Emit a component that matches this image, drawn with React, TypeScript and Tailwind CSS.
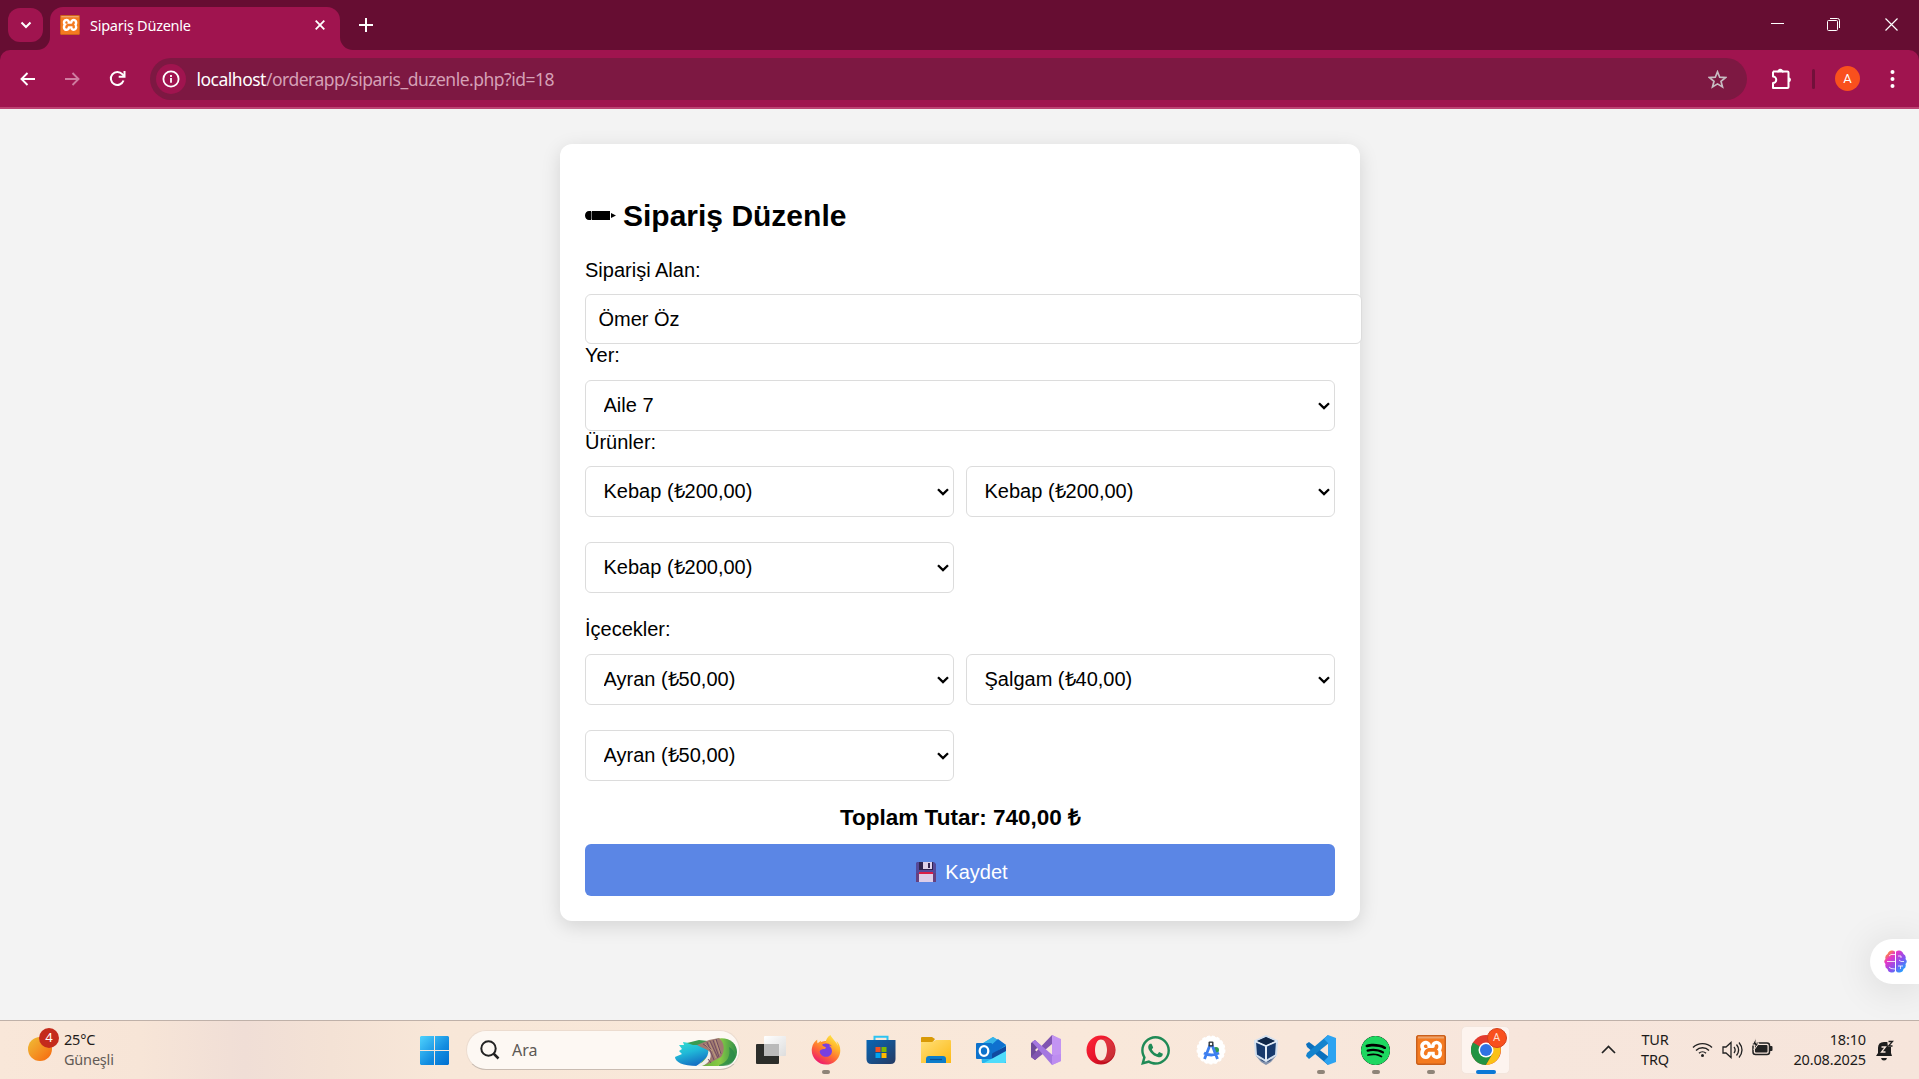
import React from "react";
import { SiSpotify, SiXampp } from "react-icons/si";
import { FaWhatsapp, FaFirefoxBrowser } from "react-icons/fa";

const ui = "font-['Noto_Sans','Open_Sans',sans-serif]";

function XamppIcon({ size, className = "" }: { size: number; className?: string }) {
  return (
    <svg width={size} height={size} viewBox="0 0 30 30" className={"shrink-0 " + className}>
      <path d="M3 3h24v24H3Z" fill="white" />
      <SiXampp size={30} color="#f47a20" />
      <rect x=".7" y=".7" width="28.600" height="28.600" rx="2" fill="none" stroke="#c95f1c" strokeWidth="1.400" />
      <path d="M2 1.500h26v2H2Z" fill="#eda26b" />
    </svg>
  );
}

function TabStrip() {
  return (
    <div className="flex h-[50px] items-start bg-[#660d32] pl-2">
      <div className="mt-2 flex h-[34px] w-[35px] items-center justify-center rounded-[12px] bg-[#a0144f]">
        <svg width="12" height="8" viewBox="0 0 12 8" fill="none" stroke="white" strokeWidth="2"><path d="M1.5 1.5 6 6l4.5-4.5" /></svg>
      </div>
      <div className="relative ml-[7px] mt-[7px] flex h-[43px] w-[290px] rounded-t-[13px] bg-[#a0144f] pl-[10px]">
        <svg className="absolute -left-[13px] bottom-0" width="13" height="13"><path d="M13 0V13H0A13 13 0 0 0 13 0Z" fill="#a0144f" /></svg>
        <svg className="absolute -right-[13px] bottom-0" width="13" height="13"><path d="M0 0V13H13A13 13 0 0 1 0 0Z" fill="#a0144f" /></svg>
        <XamppIcon size={20} className="mt-2" />
        <span className="ml-[10px] mt-[7px] whitespace-nowrap text-[14.5px] leading-[22px] tracking-[-0.26px] text-white">Sipariş Düzenle</span>
        <svg className="absolute left-[265px] top-[13px]" width="10" height="10" fill="none" stroke="white" strokeWidth="1.8"><path d="m.7.7 8.6 8.6M9.3.7.7 9.3" /></svg>
      </div>
      <svg className="ml-[19px] mt-[18px]" width="14" height="14" stroke="white" strokeWidth="2"><path d="M7 0v14M0 7h14" /></svg>
      <div className="ml-auto flex items-start">
        <svg className="mt-[23px]" width="13" height="2"><path d="M0 .5h13" stroke="white" /></svg>
        <svg className="ml-[43px] mt-[18px]" width="13" height="13" fill="none" stroke="white"><rect x=".5" y="2.5" width="10" height="10" rx="1" /><path d="M3 .5h7.500a2 2 0 0 1 2 2V10" /></svg>
        <svg className="ml-[45px] mr-[21px] mt-[18px]" width="13" height="13" fill="none" stroke="white" strokeWidth="1.2"><path d="m.5.5 12 12M12.500.5l-12 12" /></svg>
      </div>
    </div>
  );
}

function Toolbar() {
  return (
    <div className="bg-[#660d32]">
      <div className="flex h-[59px] items-start rounded-t-[10px] border-b-2 border-[#bd4273] bg-[#a0144f] pt-2">
        <svg className="ml-5 mt-[14px]" width="15" height="14" fill="none" stroke="white" strokeWidth="1.9"><path d="M15 7H1.500M7.500 1 1.500 7l6 6" /></svg>
        <svg className="ml-[30px] mt-[14px]" width="15" height="14" fill="none" stroke="#cf7ca0" strokeWidth="1.9"><path d="M0 7h13.500M7.500 1l6 6-6 6" /></svg>
        <svg className="ml-[29px] mt-[12px]" width="17" height="17" fill="none" stroke="white" strokeWidth="2"><path d="M14.500 10.500A6.500 6.500 0 1 1 13.300 4.200L15 6" /><path d="M15.500 1v5.800H9.700" /></svg>
        <div className="ml-6 flex h-[42px] w-[1597px] items-center rounded-full bg-[#7d1842] pl-[6px]">
          <div className="flex size-[30px] items-center justify-center rounded-full bg-[#a0144f]">
            <svg width="18" height="18" fill="none" stroke="white" strokeWidth="1.8"><circle cx="9" cy="9" r="7.600" /><path d="M9 8v4.700M9 5v1.900" /></svg>
          </div>
          <span className="ml-[10.5px] whitespace-nowrap text-[17.5px] leading-6 tracking-[-0.5px] text-[#d5a0b6]"><span className="text-white">localhost</span>/orderapp/siparis_duzenle.php?id=18</span>
          <svg className="ml-auto mr-5" width="19" height="19" viewBox="0 0 19 19" fill="none" stroke="#c7bcc2" strokeWidth="1.7"><path d="m9.500 1.800 2.200 5.400 5.800.4-4.500 3.700 1.500 5.700-5-3.100-5 3.100L6 11.300 1.500 7.600l5.800-.4Z" /></svg>
        </div>
        <svg className="ml-6 mt-[10px]" width="22" height="22" viewBox="0 0 22 22" fill="none" stroke="white" strokeWidth="2"><path d="M2 3.500h5.500M11 3.500h5.500q1 0 1 1v14.800q0 .7-1 .7H2v-5a3.200 3.200 0 0 0 0-6.500v-5" strokeLinejoin="round" /><path d="M6.500 3.500h6" /><path d="M6.700 3.300a2.600 2.600 0 0 1 5.200 0ZM17.500 9.200a2.400 2.400 0 0 1 0 5Z" fill="white" stroke="none" /></svg>
        <div className="ml-[19px] mt-[11px] h-5 w-[3px] rounded bg-[#72103a]" />
        <div className="ml-5 mt-2 flex size-[25px] items-center justify-center rounded-full bg-[#f9501d] font-[Roboto,sans-serif] text-[13px] text-white">A</div>
        <svg className="ml-[30px] mt-[12px]" width="5" height="18" fill="white"><circle cx="2.500" cy="2" r="2" /><circle cx="2.500" cy="9" r="2" /><circle cx="2.500" cy="16" r="2" /></svg>
      </div>
    </div>
  );
}

function Select({ value }: { value: string }) {
  return (
    <div className="relative h-[51px]">
      <select className="h-full w-full appearance-none rounded-[6px] border border-[#dcdcdc] bg-white pl-[17.5px] text-[20px] text-black" defaultValue={value}>
        <option>{value}</option>
      </select>
      <svg className="pointer-events-none absolute right-[5px] top-[22px]" width="12" height="8" fill="none" stroke="black" strokeWidth="2.300"><path d="m1 1.200 5 4.900 5-4.900" /></svg>
    </div>
  );
}

function OptionGrid({ items }: { items: string[] }) {
  return (
    <div className="grid grid-cols-2 gap-x-3 gap-y-[25px]">
      {items.map((item, i) => <Select key={i} value={item} />)}
    </div>
  );
}

function OrderCard() {
  return (
    <div className="mt-[35px] ml-[560px] h-[777px] w-[800px] rounded-[12px] bg-white px-[25px] pt-[55px] text-[20px] leading-[23px] text-black shadow-[0_5px_19px_rgba(0,0,0,0.13)]">
      <h2 className="flex h-[34px] text-[30px] font-bold leading-[34px]">
        <svg className="mr-[7px] mt-3" width="31" height="10"><path d="M4 0h2v9H4a4 4.500 0 0 1 0-9ZM7 0h18v9H7l-.5-1V1ZM26 2l5 2.500L26 7Z" /></svg>
        Sipariş Düzenle
      </h2>
      <div className="mt-[26px]">Siparişi Alan:</div>
      <input className="mt-3 block h-[50px] w-[777px] rounded-[6px] border border-[#dcdcdc] bg-white pl-[12.5px] text-[20px]" defaultValue="Ömer Öz" />
      <div className="mb-[13px]">Yer:</div>
      <Select value="Aile 7" />
      <div className="mb-3">Ürünler:</div>
      <OptionGrid items={["Kebap (₺200,00)", "Kebap (₺200,00)", "Kebap (₺200,00)"]} />
      <div className="mb-[13px] mt-[25px]">İçecekler:</div>
      <OptionGrid items={["Ayran (₺50,00)", "Şalgam (₺40,00)", "Ayran (₺50,00)"]} />
      <div className="mt-6 pl-px text-center text-[22.5px] font-bold leading-[26px]">Toplam Tutar: 740,00 ₺</div>
      <button className="mt-[13px] flex h-[52px] w-full items-center justify-center rounded-[6px] bg-[#5b86e5] pl-[4px] pt-[4px] text-white">
        <svg className="mr-[9px]" width="20" height="20">
          <path d="M1 0h17l2 2v18H0V1Z" fill="#55499a" /><path d="M0 11h20v9H0Z" fill="#66407f" />
          <path d="M3 0h14v8H3Z" fill="#2f2350" /><path d="M7 0h9v7H7Z" fill="#ddd0ea" /><path d="M12 1h2v5h-2Z" fill="#342552" />
          <path d="M3 10h14v10H3Z" fill="#ddcde8" /><path d="M3 10h14v2H3Z" fill="#d91e48" />
        </svg>
        Kaydet
      </button>
    </div>
  );
}

function StartIcon() {
  return (
    <svg width="29" height="29">
      <defs><linearGradient id="win" gradientUnits="userSpaceOnUse" x1="0" y1="0" x2="29" y2="29"><stop stopColor="#4fd3fd" /><stop offset=".6" stopColor="#128ce0" /><stop offset="1" stopColor="#006fd0" /></linearGradient></defs>
      <path fill="url(#win)" d="M1 0h13v14H0V1ZM15 0h13l1 1v13H15ZM0 15h14v14H1l-1-1ZM15 15h14v13l-1 1H15Z" />
    </svg>
  );
}

function BeachArt() {
  return (
    <svg width="62" height="29" viewBox="0 0 62 29">
      <defs>
        <linearGradient id="sea" x1="0" y1="0" x2=".4" y2="1"><stop stopColor="#35e0cf" /><stop offset=".5" stopColor="#20b9d8" /><stop offset="1" stopColor="#1673c4" /></linearGradient>
        <linearGradient id="hill"><stop stopColor="#5fae3c" /><stop offset=".55" stopColor="#8aca45" /><stop offset="1" stopColor="#2e8f49" /></linearGradient>
      </defs>
      <path d="M41 1c12-3 21 4 21 13S54 28 42 28H24Z" fill="url(#hill)" />
      <path d="M44 27c8-2 12-9 10-18 6 3 8 10 4 15-3 4-8 4-14 4Z" fill="#25864a" fillOpacity=".7" />
      <path d="M8 4 26 7l8 3-1 8-11 10C8 28 0 24 0 19c2-1 5-2 7-3l-3-3 3-2-3-4 5 0Z" fill="url(#sea)" />
      <path d="M33 9c2 8-3 15-12 19h6c8-3 12-9 11-16Z" fill="#f2eeea" />
      <path d="M12 5 24 2l9 1-6 4-9 0Z" fill="#3a9a50" />
      <path d="M22 7 34 2 44 0c6 5 6 13 2 19L29 28c5-4 8-8 6-14-3-3-8-4-13-7Z" fill="#a07a70" />
      <path d="M32 4l7 18M35 3l8 17M38 2l6 17M41 1l5 15M28 6l8 5M36 25l-3-4" stroke="#6b4660" strokeWidth=".9" fill="none" />
      <path d="M34 4l7 16M40 2l5 14M30 6l7 7" stroke="#d0b088" strokeWidth=".6" fill="none" />
    </svg>
  );
}

const icons: { art: React.ReactNode; run?: boolean; active?: boolean }[] = [
  { art: <svg width="30" height="28"><defs><linearGradient id="tv" x2="1" y2="1"><stop stopColor="#fff" /><stop offset="1" stopColor="#ddd" /></linearGradient></defs><rect y="8" width="23" height="20" rx="1" fill="#2c2d2a" /><rect x="8" width="22" height="20" rx="1" fill="url(#tv)" /><rect x="8" y="8" width="15" height="12" fill="#bababa" /></svg> },
  { run: true, art: <div className="relative"><svg width="30" height="30" viewBox="0 0 30 30" className="absolute"><defs><linearGradient id="fox" x1=".9" y1="0" x2=".3" y2="1"><stop stopColor="#fff34f" /><stop offset=".35" stopColor="#ffb52c" /><stop offset=".65" stopColor="#ff6a34" /><stop offset="1" stopColor="#ed1671" /></linearGradient></defs><circle cx="15" cy="17" r="11" fill="#ff8a2b" /><circle cx="15" cy="15.500" r="7" fill="#793fe0" /></svg><FaFirefoxBrowser size={30} fill="url(#fox)" className="relative" /></div> },
  { art: <svg width="30" height="30"><defs><linearGradient id="store" x2="1" y2="1"><stop stopColor="#0866b4" /><stop offset="1" stopColor="#263a63" /></linearGradient></defs><path d="M8.500 6V1.800h13V6" fill="none" stroke="#2dc3f2" strokeWidth="2" /><path d="M.5 5h29v19q0 5-5 5h-19q-5 0-5-5Z" fill="url(#store)" /><path d="M9.500 12h5v5h-5Z" fill="#f25022" /><path d="M15.500 12h5v5h-5Z" fill="#7fba00" /><path d="M9.500 18h5v5h-5Z" fill="#00a4ef" /><path d="M15.500 18h5v5h-5Z" fill="#ffb900" /></svg> },
  { art: <svg width="30" height="28"><defs><linearGradient id="fold" x2="1" y2="1"><stop stopColor="#ffe07a" /><stop offset="1" stopColor="#fdb913" /></linearGradient></defs><path d="M0 2q0-1 1-1h10l3 2-3 4H0Z" fill="#d99a06" /><path d="M0 6h11l4-2h14q1 0 1 1v22H0Z" fill="url(#fold)" /><path d="M5 27v-4q0-3 3-3h14q3 0 3 3v4Z" fill="#0c7dca" /><path d="M9 23.500h12" stroke="#0a4f93" strokeWidth="1.200" /></svg> },
  { art: <svg width="30" height="28"><path d="M4 9 17 1l13 8v18H6Z" fill="#27b6ee" /><path d="m4 9 13-8 5 3-12 8Z" fill="#36b3e9" /><path d="m22 3 8 6-13 9-5-6Z" fill="#0f70cf" /><path d="M30 10v7l-13 9-2-8Z" fill="#1049a0" /><path d="M30 15v10q0 2-2 2H8Z" fill="#4fdcfb" /><rect y="7" width="16" height="16" rx="1" fill="#0d72cc" /><ellipse cx="8" cy="15" rx="4.300" ry="4.800" fill="none" stroke="white" strokeWidth="2.300" /></svg> },
  { art: <svg width="30" height="30"><path d="M0 8 4 5l5 5-5 5 5 5-5 5-4-3Z" fill="#6e4b9b" /><path d="M0 22 21 0l9 5L4 25Z" fill="#8055b0" /><path d="m21 0 9 4v22l-9 4Z" fill="#c394f2" /><path d="M21 9v12l-7-6Z" fill="#f7e7d9" /><path d="M4 5 26 24l-5 6L1 7Z" fill="#a477e0" /><path d="M21 30V21l9-2v7Z" fill="#bd8df0" /></svg> },
  { art: <svg width="30" height="30"><defs><linearGradient id="op" x2="1" y2="1"><stop stopColor="#ff2638" /><stop offset=".5" stopColor="#e8142a" /><stop offset="1" stopColor="#a00913" /></linearGradient></defs><path fillRule="evenodd" fill="url(#op)" d="M15 .5a14.500 14.500 0 1 0 0 29 14.500 14.500 0 0 0 0-29Zm0 4c4 0 6 5 6 10.500S19 25.500 15 25.500 9 20.500 9 15 11 4.500 15 4.500Z" /><path d="M15 4.500C18 2.500 21 3 24 5c7 6 7 14 0 20-3 2-6 2.500-9 .5 4 0 6-5 6-10.500S19 4.500 15 4.500Z" fill="#d65050" fillOpacity=".5" /></svg> },
  { art: <FaWhatsapp size={33} color="#1f8a56" /> },
  { art: <svg width="30" height="30"><circle cx="15" cy="15" r="13.700" fill="white" stroke="#fff" strokeWidth="1.500" strokeDasharray="3 2" /><circle cx="20" cy="15" r="3" fill="#2f9b54" /><path d="m14 10-5.500 14M16 10l5.500 14M8 18q7 4 15 0" fill="none" stroke="#3d7ff0" strokeWidth="2.800" /><rect x="12.500" y="6.500" width="5" height="5" rx="1" fill="#303940" /><circle cx="15" cy="9" r="1.200" fill="white" /></svg> },
  { art: <svg width="28" height="30"><path d="m4 21 5 6 5 3 5-3 5-6Z" fill="#8493ad" /><path d="M9 24q5 4 10 0" stroke="#24416f" strokeWidth="2" fill="none" /><path d="m14 1 11 5-1 14-10 6-10-6L3 6Z" fill="#173a6d" stroke="#d3e0ef" strokeWidth="2" /><path d="m3 6 11 5 11-5M14 11v15" stroke="#e2ecf7" strokeWidth="2" fill="none" /><path d="m14 2 9 4-9 4-9-4Z" fill="#102748" /></svg> },
  { run: true, art: <svg width="30" height="30"><path d="m0 9 3-2 20 15-1 8L1 12Z" fill="#0b70bd" /><path d="m0 21 3 3L23 8l-1-8L1 18Z" fill="#1383cd" /><path fillRule="evenodd" d="m22 0 8 3v24l-8 3-4-4 4-4V8l-4-4Z" fill="#2da3f1" /></svg> },
  { run: true, art: <SiSpotify size={29} color="#1ed760" className="rounded-full bg-black" /> },
  { run: true, art: <XamppIcon size={30} /> },
  { run: true, active: true, art: <div className="relative"><svg width="30" height="30"><circle cx="15" cy="15" r="15" fill="#e33b2e" /><path d="M15 15 2 7.500A15 15 0 0 0 15 30l6.500-11Z" fill="#229342" /><path d="M21.500 8H28A15 15 0 0 1 15 30l7-12Z" fill="#fbc116" /><circle cx="15" cy="15" r="7.500" fill="white" /><circle cx="15" cy="15" r="6" fill="#2f72e4" /></svg><div className="absolute -right-[6px] -top-[7px] flex size-[20px] items-center justify-center rounded-full border border-[#d3401b] bg-[#f9501d] font-[Roboto,sans-serif] text-[11px] text-[#ffe0d5]">A</div></div> },
];

function Taskbar() {
  return (
    <div className="flex h-[59px] shrink-0 border-t border-[#bfb1a9] bg-[linear-gradient(90deg,#f9e7d9_0px,#f7e5d7_140px,#f0ded6_245px,#f4e2d5_330px,#f8e7d8_440px,#f9e8da_1100px,#f7e6dc_1500px,#f6e5db_1919px)]">
      <div className="flex w-[420px]">
        <div className="relative ml-7 mt-4 size-6 rounded-full bg-linear-to-br from-[#edbe36] to-[#f56309]">
          <div className="absolute -top-[9px] left-[11px] flex size-[20px] items-center justify-center rounded-full bg-[#c42b1c] text-[13px] text-white">4</div>
        </div>
        <div className="ml-3 mt-[8px] text-[14.5px] leading-5 tracking-[-0.2px] text-[#1f1c1a]">25°C<br /><span className="text-[#625a55]">Güneşli</span></div>
      </div>
      <div className="mt-[15px]"><StartIcon /></div>
      <div className="ml-[17px] mt-[9px] flex h-[40px] w-[274px] items-center rounded-full border border-b-[#c9bcb2] border-[#ecdccf] bg-[#fdf8f3] pl-[13px] pr-[2px]">
        <svg width="20" height="20" fill="none" stroke="#222" strokeWidth="2"><circle cx="8.500" cy="8.500" r="7.200" /><path d="m13.500 13.500 5 5" strokeWidth="2.500" /></svg>
        <span className="ml-3 text-[16px] text-[#5c5855]">Ara</span>
        <div className="ml-auto mt-[4px]"><BeachArt /></div>
      </div>
      <div className="ml-[3px] flex">
        {icons.map((icon, i) => (
          <div key={i} className="relative flex h-[58px] w-[55px] justify-center pt-[5px]">
            <div className={"flex h-[48px] w-[49px] items-center justify-center rounded-[5px] " + (icon.active ? "border border-[#f3e5dc] bg-[#fdf4ef]" : "")}>{icon.art}</div>
            {icon.run && <div className={"absolute top-[49px] h-1 rounded-full " + (icon.active ? "w-5 bg-[#0a78d6]" : "w-2 bg-[#8e8478]")} />}
          </div>
        ))}
      </div>
      <div className="ml-auto flex text-[14.5px] leading-5 tracking-[-0.15px] text-[#1c1a19]">
        <svg className="mt-6" width="15" height="9" fill="none" stroke="#222" strokeWidth="1.700"><path d="m1 8 6.500-6.500L14 8" /></svg>
        <div className="ml-[24px] mt-[8px] w-[30px] text-center">TUR<br />TRQ</div>
        <svg className="ml-[22px] mt-5" width="21" height="17" fill="none" stroke="#222" strokeWidth="1.400"><path d="M1 6.500a13.500 13.500 0 0 1 19 0M4 9.500a9.200 9.200 0 0 1 13 0M7 12.300a5 5 0 0 1 7 0" /><circle cx="10.500" cy="14.500" r="1.500" fill="#222" stroke="none" /></svg>
        <svg className="ml-[9px] mt-5" width="21" height="18" fill="none" stroke="#222" strokeWidth="1.300"><path d="M1 6h3l5-4.500v15L4 12H1ZM12 6q2.300 3 0 6M14.500 3.500q4.200 5.500 0 11M17 1.500q6 7.500 0 15" /></svg>
        <svg className="ml-[9px] mt-[17px]" width="21" height="18"><rect x="1" y="5" width="16.500" height="11.500" rx="2.500" fill="none" stroke="#222" strokeWidth="1.500" /><rect x="3" y="7" width="12.500" height="7.500" rx="1" fill="#222" /><path d="M18 8h1.500q1 0 1 1v3q0 1-1 1H18Z" fill="#222" /><path d="M4 0 0 7h3l-1 5 5-7H4Z" fill="#222" stroke="#f6e5db" strokeWidth="1" /></svg>
        <div className="mt-[8px] w-[93px] whitespace-nowrap text-right">18:10<br />20.08.2025</div>
        <svg className="ml-[10px] mr-[25px] mt-[19px]" width="18" height="21"><path d="M2 13V8q0-6 6-6h7v11l1 3H0Z" fill="#1d1d1d" /><path d="M5 18h6q-.5 2.500-3 2.500T5 18Z" fill="#1d1d1d" /><path d="M11 0h7v7h-6Z" fill="#f6e5db" /><path d="M5.500 7h4l-4 5h4" stroke="#f6e5db" strokeWidth="1.300" fill="none" /><path d="M12.500 1.500h4l-4 4.500h4" stroke="#1d1d1d" strokeWidth="1.300" fill="none" /></svg>
      </div>
    </div>
  );
}

function AssistantPill() {
  return (
    <div className="absolute right-0 top-[830px] flex h-[45px] w-[49px] items-center rounded-l-full bg-white pl-[14px] shadow-[0_4px_40px_rgba(0,0,0,0.12)]">
      <svg width="23" height="23">
        <defs><linearGradient id="brain" x2="1" y2="1"><stop offset=".08" stopColor="#ffa21f" /><stop offset=".3" stopColor="#e935c5" /><stop offset=".6" stopColor="#8552f0" /><stop offset=".9" stopColor="#1ba7ff" /></linearGradient></defs>
        <path fill="url(#brain)" d="M11 2v19q-1 2-4 1.500T3.500 19Q.5 17.500 1.500 14q-2.500-2.500 0-5Q.5 5.500 3.500 4 5 0 8.500.5 11 .5 11 2ZM12 2v19q1 2 4 1.500t3.500-3.500q3-1.500 2-5 2.500-2.500 0-5 1-3.500-2-5Q18 0 14.500.5 12 .5 12 2Z" />
        <path d="M5 6l2-1.500h4M3 11.500h8M5 17q1 2 6 2M14 6h3v2M15 10l2 1.500h3M14 16h5M16.500 16v3" stroke="white" strokeOpacity=".8" fill="none" />
      </svg>
    </div>
  );
}

export default function App() {
  return (
    <div className={"flex h-[1079px] w-[1919px] flex-col overflow-hidden bg-[#f3f3f3] " + ui}>
      <TabStrip />
      <Toolbar />
      <main className="relative flex-1 overflow-hidden font-['Liberation_Sans',Arial,sans-serif]">
        <OrderCard />
        <AssistantPill />
      </main>
      <Taskbar />
    </div>
  );
}
